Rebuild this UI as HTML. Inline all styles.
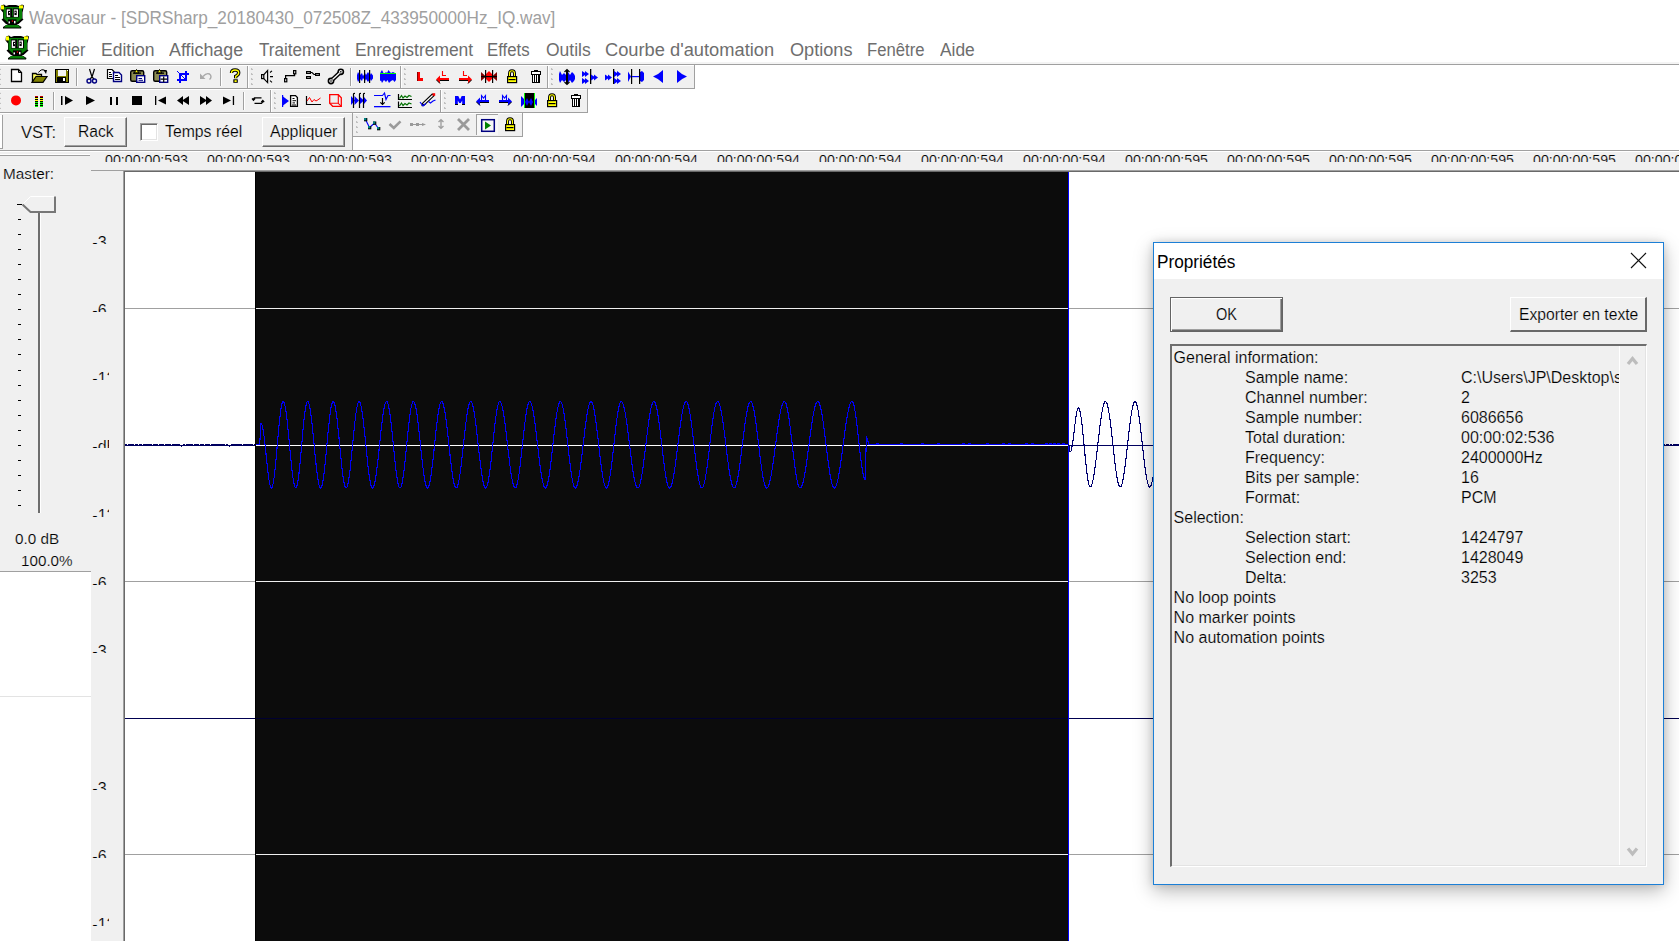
<!DOCTYPE html>
<html><head><meta charset="utf-8"><title>Wavosaur</title><style>
*{margin:0;padding:0;box-sizing:border-box}
html,body{width:1679px;height:941px;overflow:hidden;background:#fff;font-family:"Liberation Sans",sans-serif}
.a{position:absolute}
.t{position:absolute;line-height:1;white-space:pre;transform-origin:0 0;-webkit-text-stroke:0.18px #f0f0f0}
.w{-webkit-text-stroke:0}
svg{position:absolute;overflow:visible}
</style></head><body>

<div class="t w" style="left:29.40px;top:8.80px;font-size:18.9px;color:#a0a0a0;transform:scaleX(0.9091);">Wavosaur - [SDRSharp_20180430_072508Z_433950000Hz_IQ.wav]</div>
<svg class="a" style="left:0;top:0" width="40" height="64"><g transform="translate(0,4.4)"><path d="M1,1 L4,0 L6,1.5 L9,0.5 L16,0.5 L19,1.5 L22,0 L24,1 L23,6 L22.5,8 L22.5,14 L23.5,15 L18.5,19.5 L16.5,19.5 L17.5,20 L21.5,22.5 L21,24 L3,24 L3,22.5 L7,20 L8,19.5 L6,19.5 L1.5,15 L3,14 L3,8 L0.5,5 Z" fill="#000"/>
<path d="M3.5,2.5 L22,2.5 L22,14 L17,18 L8,18 L3.5,14 Z" fill="#078007"/>
<path d="M6,20.5 L18,20.5 L20.5,23 L4,23 Z" fill="#078007"/>
<rect x="1" y="1" width="3" height="4" fill="#ff0"/>
<rect x="19" y="1" width="4" height="3" fill="#ff0"/>
<rect x="6" y="4" width="13" height="9" fill="#000"/>
<rect x="6.7" y="5" width="3.5" height="7.5" fill="#fff"/>
<rect x="13.8" y="5" width="4.2" height="7.5" fill="#fff"/>
<rect x="8" y="6.4" width="2.3" height="4.4" fill="#000"/><rect x="9" y="7.6" width="1" height="1.2" fill="#fff"/>
<rect x="14.4" y="6.2" width="2.3" height="4.5" fill="#000"/><rect x="14.7" y="7.4" width="1" height="1.2" fill="#fff"/>
<rect x="12" y="3" width="0.8" height="9" fill="#078007"/>
<rect x="8" y="15" width="8.5" height="4.5" fill="#000"/>
<rect x="8.5" y="17" width="1.5" height="2" fill="#fff"/>
<rect x="14" y="16.5" width="1.5" height="2.5" fill="#fff"/>
<rect x="11.8" y="16" width="1.3" height="1.3" fill="#f00"/>
</g><g transform="translate(5,35.4)"><path d="M1,1 L4,0 L6,1.5 L9,0.5 L16,0.5 L19,1.5 L22,0 L24,1 L23,6 L22.5,8 L22.5,14 L23.5,15 L18.5,19.5 L16.5,19.5 L17.5,20 L21.5,22.5 L21,24 L3,24 L3,22.5 L7,20 L8,19.5 L6,19.5 L1.5,15 L3,14 L3,8 L0.5,5 Z" fill="#000"/>
<path d="M3.5,2.5 L22,2.5 L22,14 L17,18 L8,18 L3.5,14 Z" fill="#078007"/>
<path d="M6,20.5 L18,20.5 L20.5,23 L4,23 Z" fill="#078007"/>
<rect x="1" y="1" width="3" height="4" fill="#ff0"/>
<rect x="19" y="1" width="4" height="3" fill="#ff0"/>
<rect x="6" y="4" width="13" height="9" fill="#000"/>
<rect x="6.7" y="5" width="3.5" height="7.5" fill="#fff"/>
<rect x="13.8" y="5" width="4.2" height="7.5" fill="#fff"/>
<rect x="8" y="6.4" width="2.3" height="4.4" fill="#000"/><rect x="9" y="7.6" width="1" height="1.2" fill="#fff"/>
<rect x="14.4" y="6.2" width="2.3" height="4.5" fill="#000"/><rect x="14.7" y="7.4" width="1" height="1.2" fill="#fff"/>
<rect x="12" y="3" width="0.8" height="9" fill="#078007"/>
<rect x="8" y="15" width="8.5" height="4.5" fill="#000"/>
<rect x="8.5" y="17" width="1.5" height="2" fill="#fff"/>
<rect x="14" y="16.5" width="1.5" height="2.5" fill="#fff"/>
<rect x="11.8" y="16" width="1.3" height="1.3" fill="#f00"/>
</g></svg>
<div class="t w" style="left:36.60px;top:40.80px;font-size:18.9px;color:#6e6e6e;transform:scaleX(0.8553);">Fichier</div>
<div class="t w" style="left:100.60px;top:40.80px;font-size:18.9px;color:#6e6e6e;transform:scaleX(0.9275);">Edition</div>
<div class="t w" style="left:169.40px;top:40.80px;font-size:18.9px;color:#6e6e6e;transform:scaleX(0.9445);">Affichage</div>
<div class="t w" style="left:258.70px;top:40.80px;font-size:18.9px;color:#6e6e6e;transform:scaleX(0.9038);">Traitement</div>
<div class="t w" style="left:354.60px;top:40.80px;font-size:18.9px;color:#6e6e6e;transform:scaleX(0.9224);">Enregistrement</div>
<div class="t w" style="left:487.40px;top:40.80px;font-size:18.9px;color:#6e6e6e;transform:scaleX(0.8879);">Effets</div>
<div class="t w" style="left:545.50px;top:40.80px;font-size:18.9px;color:#6e6e6e;transform:scaleX(0.9253);">Outils</div>
<div class="t w" style="left:605.00px;top:40.80px;font-size:18.9px;color:#6e6e6e;transform:scaleX(0.9676);">Courbe d'automation</div>
<div class="t w" style="left:789.70px;top:40.80px;font-size:18.9px;color:#6e6e6e;transform:scaleX(0.9596);">Options</div>
<div class="t w" style="left:867.10px;top:40.80px;font-size:18.9px;color:#6e6e6e;transform:scaleX(0.8829);">Fenêtre</div>
<div class="t w" style="left:939.50px;top:40.80px;font-size:18.9px;color:#6e6e6e;transform:scaleX(0.9200);">Aide</div>
<div class="a" style="left:0px;top:62px;width:1679px;height:2px;background:#f4f4f4;"></div>
<div class="a" style="left:0px;top:64px;width:1679px;height:1px;background:#a0a0a0;"></div>
<div class="a" style="left:0px;top:65px;width:695px;height:24px;background:#f0f0f0;"></div>
<div class="a" style="left:694px;top:65px;width:1px;height:24px;background:#a0a0a0;"></div>
<div class="a" style="left:0px;top:88px;width:695px;height:1px;background:#a0a0a0;"></div>
<div class="a" style="left:0px;top:89px;width:588px;height:24px;background:#f0f0f0;"></div>
<div class="a" style="left:587px;top:89px;width:1px;height:24px;background:#a0a0a0;"></div>
<div class="a" style="left:0px;top:112px;width:588px;height:1px;background:#a0a0a0;"></div>
<div class="a" style="left:0px;top:113px;width:353px;height:38px;background:#f0f0f0;"></div>
<div class="a" style="left:352px;top:113px;width:1px;height:38px;background:#a0a0a0;"></div>
<div class="a" style="left:353px;top:113px;width:170px;height:24px;background:#f0f0f0;"></div>
<div class="a" style="left:522px;top:113px;width:1px;height:24px;background:#a0a0a0;"></div>
<div class="a" style="left:353px;top:136px;width:170px;height:1px;background:#a0a0a0;"></div>
<svg class="a" style="left:0;top:0" width="700" height="160" viewBox="0 0 700 160">
<rect x="0" y="65" width="694" height="1" fill="#fff"/>
<rect x="0" y="89" width="587" height="1" fill="#fff"/>
<rect x="0" y="113" width="352" height="1" fill="#fff"/>
<rect x="353" y="113" width="169" height="1" fill="#fff"/>
<rect x="-1" y="68" width="2" height="2" fill="#c0c0c0"/><rect x="0" y="68" width="1" height="1" fill="#e8e8e8"/>
<rect x="-1" y="73" width="2" height="2" fill="#c0c0c0"/><rect x="0" y="73" width="1" height="1" fill="#e8e8e8"/>
<rect x="-1" y="78" width="2" height="2" fill="#c0c0c0"/><rect x="0" y="78" width="1" height="1" fill="#e8e8e8"/>
<rect x="-1" y="83" width="2" height="2" fill="#c0c0c0"/><rect x="0" y="83" width="1" height="1" fill="#e8e8e8"/>
<rect x="251" y="68" width="2" height="2" fill="#c0c0c0"/><rect x="252" y="68" width="1" height="1" fill="#e8e8e8"/>
<rect x="251" y="73" width="2" height="2" fill="#c0c0c0"/><rect x="252" y="73" width="1" height="1" fill="#e8e8e8"/>
<rect x="251" y="78" width="2" height="2" fill="#c0c0c0"/><rect x="252" y="78" width="1" height="1" fill="#e8e8e8"/>
<rect x="251" y="83" width="2" height="2" fill="#c0c0c0"/><rect x="252" y="83" width="1" height="1" fill="#e8e8e8"/>
<rect x="404" y="68" width="2" height="2" fill="#c0c0c0"/><rect x="405" y="68" width="1" height="1" fill="#e8e8e8"/>
<rect x="404" y="73" width="2" height="2" fill="#c0c0c0"/><rect x="405" y="73" width="1" height="1" fill="#e8e8e8"/>
<rect x="404" y="78" width="2" height="2" fill="#c0c0c0"/><rect x="405" y="78" width="1" height="1" fill="#e8e8e8"/>
<rect x="404" y="83" width="2" height="2" fill="#c0c0c0"/><rect x="405" y="83" width="1" height="1" fill="#e8e8e8"/>
<rect x="551" y="68" width="2" height="2" fill="#c0c0c0"/><rect x="552" y="68" width="1" height="1" fill="#e8e8e8"/>
<rect x="551" y="73" width="2" height="2" fill="#c0c0c0"/><rect x="552" y="73" width="1" height="1" fill="#e8e8e8"/>
<rect x="551" y="78" width="2" height="2" fill="#c0c0c0"/><rect x="552" y="78" width="1" height="1" fill="#e8e8e8"/>
<rect x="551" y="83" width="2" height="2" fill="#c0c0c0"/><rect x="552" y="83" width="1" height="1" fill="#e8e8e8"/>
<rect x="-1" y="92" width="2" height="2" fill="#c0c0c0"/><rect x="0" y="92" width="1" height="1" fill="#e8e8e8"/>
<rect x="-1" y="97" width="2" height="2" fill="#c0c0c0"/><rect x="0" y="97" width="1" height="1" fill="#e8e8e8"/>
<rect x="-1" y="102" width="2" height="2" fill="#c0c0c0"/><rect x="0" y="102" width="1" height="1" fill="#e8e8e8"/>
<rect x="-1" y="107" width="2" height="2" fill="#c0c0c0"/><rect x="0" y="107" width="1" height="1" fill="#e8e8e8"/>
<rect x="274" y="92" width="2" height="2" fill="#c0c0c0"/><rect x="275" y="92" width="1" height="1" fill="#e8e8e8"/>
<rect x="274" y="97" width="2" height="2" fill="#c0c0c0"/><rect x="275" y="97" width="1" height="1" fill="#e8e8e8"/>
<rect x="274" y="102" width="2" height="2" fill="#c0c0c0"/><rect x="275" y="102" width="1" height="1" fill="#e8e8e8"/>
<rect x="274" y="107" width="2" height="2" fill="#c0c0c0"/><rect x="275" y="107" width="1" height="1" fill="#e8e8e8"/>
<rect x="444" y="92" width="2" height="2" fill="#c0c0c0"/><rect x="445" y="92" width="1" height="1" fill="#e8e8e8"/>
<rect x="444" y="97" width="2" height="2" fill="#c0c0c0"/><rect x="445" y="97" width="1" height="1" fill="#e8e8e8"/>
<rect x="444" y="102" width="2" height="2" fill="#c0c0c0"/><rect x="445" y="102" width="1" height="1" fill="#e8e8e8"/>
<rect x="444" y="107" width="2" height="2" fill="#c0c0c0"/><rect x="445" y="107" width="1" height="1" fill="#e8e8e8"/>
<rect x="356" y="116" width="2" height="2" fill="#c0c0c0"/><rect x="357" y="116" width="1" height="1" fill="#e8e8e8"/>
<rect x="356" y="121" width="2" height="2" fill="#c0c0c0"/><rect x="357" y="121" width="1" height="1" fill="#e8e8e8"/>
<rect x="356" y="126" width="2" height="2" fill="#c0c0c0"/><rect x="357" y="126" width="1" height="1" fill="#e8e8e8"/>
<rect x="356" y="131" width="2" height="2" fill="#c0c0c0"/><rect x="357" y="131" width="1" height="1" fill="#e8e8e8"/>
<rect x="247" y="66" width="1" height="22" fill="#a0a0a0"/><rect x="248" y="66" width="1" height="22" fill="#fff"/>
<rect x="400" y="66" width="1" height="22" fill="#a0a0a0"/><rect x="401" y="66" width="1" height="22" fill="#fff"/>
<rect x="547" y="66" width="1" height="22" fill="#a0a0a0"/><rect x="548" y="66" width="1" height="22" fill="#fff"/>
<rect x="270" y="90" width="1" height="22" fill="#a0a0a0"/><rect x="271" y="90" width="1" height="22" fill="#fff"/>
<rect x="440" y="90" width="1" height="22" fill="#a0a0a0"/><rect x="441" y="90" width="1" height="22" fill="#fff"/>
<rect x="76" y="68" width="1" height="18" fill="#a0a0a0"/><rect x="77" y="68" width="1" height="18" fill="#fff"/>
<rect x="220" y="68" width="1" height="18" fill="#a0a0a0"/><rect x="221" y="68" width="1" height="18" fill="#fff"/>
<rect x="350" y="68" width="1" height="18" fill="#a0a0a0"/><rect x="351" y="68" width="1" height="18" fill="#fff"/>
<rect x="53" y="92" width="1" height="18" fill="#a0a0a0"/><rect x="54" y="92" width="1" height="18" fill="#fff"/>
<rect x="243" y="92" width="1" height="18" fill="#a0a0a0"/><rect x="244" y="92" width="1" height="18" fill="#fff"/>
<path d="M11.5,69.5 H18.5 L21.5,72.5 V81.5 H11.5 Z" fill="#fff" stroke="#000" stroke-width="1.3"/>
<path d="M18.5,69.5 V72.5 H21.5" fill="none" stroke="#000" stroke-width="1"/>
<path d="M32.5,82 V73.5 H36 L37,74.5 H41.5 V77" fill="#ffff60" stroke="#000" stroke-width="1.3"/>
<path d="M32,82.3 L36,76.5 H47 L43,82.3 Z" fill="#808000" stroke="#000" stroke-width="1.2"/>
<path d="M38.5,72.5 Q41.5,68.2 45,70.5" fill="none" stroke="#000" stroke-width="1"/>
<path d="M43.5,70 L47,70 L46,74 Z" fill="#000"/>
<rect x="55" y="69" width="14" height="14" fill="#000"/>
<rect x="56" y="70" width="12" height="12" fill="#808000"/>
<rect x="58" y="70" width="8" height="6" fill="#f4f4f4"/>
<rect x="57" y="77" width="9" height="5" fill="#000"/>
<rect x="63" y="78" width="2" height="3" fill="#fff"/>
<rect x="67" y="70" width="1" height="1" fill="#fff"/>
<path d="M89.5,69 L92,77 M94.5,69 L92,77 M92,77 L90,79 M92,77 L94,79" fill="none" stroke="#000" stroke-width="1.2"/>
<circle cx="89" cy="81" r="2" fill="none" stroke="#000080" stroke-width="1.4"/>
<circle cx="94.5" cy="81" r="2" fill="none" stroke="#000080" stroke-width="1.4"/>
<path d="M107.5,69.5 H112 L114,71.5 V78.5 H107.5 Z" fill="#fff" stroke="#000" stroke-width="1.2"/>
<path d="M109,72.5 H111 M109,74.5 H112 M109,76.5 H112" stroke="#000" stroke-width="1"/>
<path d="M113.5,72.5 H119 L121.5,75 V81.5 H113.5 Z" fill="#fff" stroke="#000080" stroke-width="1.4"/>
<path d="M115,75.5 H118 M115,77.5 H120 M115,79.5 H120" stroke="#000" stroke-width="1"/>
<rect x="130.7" y="70.7" width="13" height="10.6" rx="1.5" fill="#8a8a50" stroke="#000" stroke-width="1.4"/>
<path d="M134,73 L136.5,69.5 L139,73 Z" fill="#ff0" stroke="#000" stroke-width="1"/>
<rect x="133" y="72.5" width="8" height="1.3" fill="#000"/>
<rect x="136.7" y="75.7" width="8" height="6.6" fill="#fff" stroke="#000080" stroke-width="1.4"/>
<path d="M138.5,78.5 H142 M138.5,80.3 H143" stroke="#000080" stroke-width="1"/>
<rect x="153.7" y="70.7" width="13" height="10.6" rx="1.5" fill="#8a8a50" stroke="#000" stroke-width="1.4"/>
<path d="M157,73 L159.5,69.5 L162,73 Z" fill="#ff0" stroke="#000" stroke-width="1"/>
<rect x="156" y="72.5" width="8" height="1.3" fill="#000"/>
<rect x="159.7" y="75.7" width="8" height="6.6" fill="#fff" stroke="#000080" stroke-width="1.4"/>
<path d="M163.7,76.5 V82 M160.5,79.2 H167" stroke="#000" stroke-width="1.2"/>
<path d="M180,74 H186 V80 H180 Z" fill="none" stroke="#00f" stroke-width="2"/>
<rect x="185" y="71" width="2" height="3" fill="#00f"/><rect x="186" y="73" width="3" height="2" fill="#00f"/>
<rect x="177" y="79" width="3" height="2" fill="#00f"/><rect x="179" y="80" width="2" height="3" fill="#00f"/>
<path d="M177,71 L185,79" stroke="#00f" stroke-width="1"/>
<path d="M203,76.5 Q206.5,72.5 209.5,74 Q212.5,76.5 209.5,79.5" fill="none" stroke="#a8a8a8" stroke-width="1.4"/>
<path d="M200,73.5 L200,79 L205.5,79 Z" fill="#a8a8a8"/>
<path d="M231.5,73 Q231.5,70 235,70 Q238.7,70 238.7,72.8 Q238.7,75 235.7,76.3 V78.2" fill="none" stroke="#000" stroke-width="3.4"/>
<path d="M231.5,73 Q231.5,70 235,70 Q238.7,70 238.7,72.8 Q238.7,75 235.7,76.3 V78.2" fill="none" stroke="#ff0" stroke-width="1.3"/>
<rect x="233.3" y="79.3" width="4.5" height="3.5" fill="#000"/><rect x="234.5" y="80.2" width="2.2" height="1.8" fill="#ff0"/>
<rect x="261.6" y="74.6" width="2.2" height="4" fill="none" stroke="#000" stroke-width="1.2"/>
<path d="M263.8,74.6 L267.6,70.6 V82.6 L263.8,78.6" fill="none" stroke="#000" stroke-width="1.2"/>
<path d="M270,72.5 L272,70.8 M270,76.6 H273 M270,80.7 L272,82.4" stroke="#000" stroke-width="1.1"/>
<rect x="284.6" y="78.6" width="2.2" height="3.2" fill="none" stroke="#000" stroke-width="1.2"/>
<path d="M285.6,78.6 V75.6 H294.6 V73.8" fill="none" stroke="#000" stroke-width="1.2"/>
<rect x="293.6" y="70.6" width="2.2" height="3.2" fill="none" stroke="#000" stroke-width="1.2"/>
<rect x="306.6" y="71.6" width="3.8" height="1.8" fill="none" stroke="#000" stroke-width="1.2"/>
<rect x="306.6" y="76.6" width="3.8" height="1.8" fill="none" stroke="#000" stroke-width="1.2"/>
<rect x="315.6" y="73.6" width="3.8" height="1.8" fill="none" stroke="#000" stroke-width="1.2"/>
<path d="M310.4,72.5 H312 L314,74.5 H315.6" fill="none" stroke="#000" stroke-width="1.1"/>
<path d="M331.5,80.5 L340.5,72" stroke="#000" stroke-width="4.2"/>
<circle cx="331" cy="81" r="2.6" fill="#fff" stroke="#000" stroke-width="1.6"/>
<circle cx="340.8" cy="71.8" r="2.6" fill="#fff" stroke="#000" stroke-width="1.6"/>
<path d="M332.5,79.5 L339.5,73" stroke="#fff" stroke-width="1.3"/>
<rect x="330.3" y="80.3" width="1.4" height="1.4" fill="#000"/><rect x="340.1" y="71.1" width="1.4" height="1.4" fill="#000"/>
<path d="M357,75 L358,72 L360,75 L362,73 L363,76 L365,73 L366,75 L368,72 L370,75 L371,73 L373,75.5 V78.5 L371,81 L370,79 L368,82 L366,79 L365,81 L363,78 L362,81 L360,79 L358,82 L357,79 Z" fill="#00f"/>
<rect x="359" y="70" width="1.2" height="13" fill="#000"/><rect x="364" y="70" width="1.2" height="13" fill="#000"/><rect x="369" y="70" width="1.2" height="13" fill="#000"/>
<path d="M380,73.5 L381,71.5 L382,70 L383.5,73 L385,73 L386,72 L387,73 L388.5,70 L390,72 L391,73 L393,72 L396,73.5 V80 L394.5,82 L393,80 L391,81 L389,83 L387.5,80 L386,82 L384,80 L382,83 L381,80.5 L380,81 Z" fill="#00f"/>
<rect x="380" y="73" width="16" height="1" fill="#00ff00"/>
<rect x="417" y="72" width="3" height="9" fill="#f00"/><rect x="417" y="78" width="6" height="3" fill="#f00"/><rect x="417" y="72" width="1" height="9" fill="#900000"/>
<path d="M442.5,71 V75.5 H446" fill="none" stroke="#f00" stroke-width="1.1"/>
<path d="M436,79.5 L440,75.5 V78 H449 V81 H440 V83.5 Z" fill="#f00"/>
<rect x="440" y="80" width="9" height="1" fill="#000"/><path d="M436.5,80 L440,83.5" stroke="#000" stroke-width="1"/>
<path d="M463.5,71 V75.5 H467" fill="none" stroke="#f00" stroke-width="1.1"/>
<path d="M472,79.5 L468,75.5 V78 H459 V81 H468 V83.5 Z" fill="#f00"/>
<rect x="459" y="80" width="9" height="1" fill="#000"/><path d="M471.5,80 L468,83.5" stroke="#000" stroke-width="1"/>
<path d="M481,72 L486,76.5 L481,81 Z" fill="#800000"/><path d="M497,72 L492,76.5 L497,81 Z" fill="#800000"/>
<path d="M486,74 L489,71 L492,74 V79 L489,82 L486,79 Z" fill="#f00"/>
<rect x="481" y="76" width="16" height="1.2" fill="#000"/>
<rect x="485" y="70" width="1.2" height="13" fill="#000"/><rect x="492" y="70" width="1.2" height="13" fill="#000"/>
<path d="M509.5,76 V73.5 Q509.5,70.7 512,70.7 Q514.5,70.7 514.5,73.5 V76" fill="none" stroke="#000" stroke-width="3"/><path d="M509.5,76 V73.5 Q509.5,70.7 512,70.7 Q514.5,70.7 514.5,73.5 V76" fill="none" stroke="#ff0" stroke-width="1.1"/><rect x="507.6" y="76.6" width="9" height="6" fill="#ff0" stroke="#000" stroke-width="1.2"/><rect x="508.5" y="79" width="7" height="1.2" fill="#000"/>
<g shape-rendering="crispEdges"><rect x="531" y="71" width="10" height="4" fill="#000"/><rect x="532" y="72" width="8" height="2" fill="#fff"/><rect x="534" y="70" width="4" height="1" fill="#000"/><rect x="532" y="75" width="8" height="8" fill="#000"/><rect x="533" y="75" width="1" height="7" fill="#fff"/><rect x="535" y="75" width="1" height="7" fill="#fff"/><rect x="537" y="75" width="1" height="7" fill="#fff"/></g>
<path d="M559,74 L560,71 L562,75 L564,73 L566,75 L568,72 L570,75 L572,72 L574,74 L575,76 V79 L574,81 L572,83 L570,80 L568,83 L566,80 L564,82 L562,80 L560,83 L559,80 Z" fill="#00f"/>
<rect x="566" y="70" width="2" height="14" fill="#000"/>
<path d="M564.5,72 L567,69.5 L569.5,72 M564.5,82 L567,84.5 L569.5,82" fill="none" stroke="#000" stroke-width="1.2"/>
<path d="M582,71 L585,73 V71 L589,74 L585,77 V75 L582,77 Z" fill="#00f"/>
<path d="M582,78 L585,80 V78 L589,81 L585,84 V82 L582,84 Z" fill="#00f"/>
<rect x="590" y="69" width="1.3" height="15" fill="#000"/>
<path d="M591,74.5 L594,76.5 V74.5 L598,77.5 L594,80.5 V78.5 L591,80.5 Z" fill="#00f"/>
<path d="M605,74.5 L608,76.5 V74.5 L612,77.5 L608,80.5 V78.5 L605,80.5 Z" fill="#00f"/>
<rect x="613" y="69" width="1.3" height="15" fill="#000"/>
<path d="M614,71 L617,73 V71 L621,74 L617,77 V75 L614,77 Z" fill="#00f"/>
<path d="M614,78 L617,80 V78 L621,81 L617,84 V82 L614,84 Z" fill="#00f"/>
<path d="M628,71.5 L631,76.5 L628,82 Z" fill="#00f"/><path d="M640,72 L642,71 L644,73 V80 L642,82 L640,81 Z" fill="#00f"/>
<rect x="631" y="69" width="1.2" height="15" fill="#000"/><rect x="639" y="69" width="1.2" height="15" fill="#000"/><rect x="632" y="76" width="7" height="1.2" fill="#00f"/>
<path d="M653,76.5 Q659,74 663,70 V83 Q659,79 653,76.5 Z" fill="#00f"/>
<path d="M687,76.5 Q681,74 677,70 V83 Q681,79 687,76.5 Z" fill="#00f"/>
<circle cx="16" cy="100.4" r="5" fill="#f00"/>
<rect x="35" y="96" width="3" height="1" fill="#c00000"/><rect x="40" y="96" width="3" height="1" fill="#c00000"/>
<rect x="35" y="97" width="3" height="1" fill="#000"/><rect x="40" y="97" width="3" height="1" fill="#000"/>
<rect x="35" y="98" width="3" height="1" fill="#ff0"/><rect x="40" y="98" width="3" height="1" fill="#ff0"/>
<rect x="35" y="99" width="3" height="1" fill="#000"/><rect x="40" y="99" width="3" height="1" fill="#000"/>
<rect x="35" y="100" width="3" height="1" fill="#ff0"/><rect x="40" y="100" width="3" height="1" fill="#ff0"/>
<rect x="35" y="101" width="3" height="1" fill="#000"/><rect x="40" y="101" width="3" height="1" fill="#000"/>
<rect x="35" y="102" width="3" height="1" fill="#0f0"/><rect x="40" y="102" width="3" height="1" fill="#0f0"/>
<rect x="35" y="103" width="3" height="1" fill="#000"/><rect x="40" y="103" width="3" height="1" fill="#000"/>
<rect x="35" y="104" width="3" height="1" fill="#0f0"/><rect x="40" y="104" width="3" height="1" fill="#0f0"/>
<rect x="35" y="105" width="3" height="1" fill="#000"/><rect x="40" y="105" width="3" height="1" fill="#000"/>
<rect x="35" y="106" width="3" height="1" fill="#0f0"/><rect x="40" y="106" width="3" height="1" fill="#0f0"/>
<rect x="61" y="96" width="1.5" height="9" fill="#000"/><path d="M65,96 L73,100.5 L65,105 Z" fill="#000"/>
<path d="M86,96 L95,100.5 L86,105 Z" fill="#000"/>
<rect x="110" y="97" width="2" height="8" fill="#000"/><rect x="116" y="97" width="2" height="8" fill="#000"/>
<rect x="132" y="96" width="10" height="9" fill="#000"/>
<rect x="155" y="96" width="1.3" height="9" fill="#000"/><path d="M158,100.5 L166,96.5 V104.5 Z" fill="#000"/>
<path d="M177,100.5 L183,96 V105 Z M182,100.5 L189,96 V105 Z" fill="#000"/>
<path d="M212,100.5 L206,96 V105 Z M207,100.5 L200,96 V105 Z" fill="#000"/>
<path d="M223,96.5 L231,100.5 L223,104.5 Z" fill="#000"/><rect x="232.8" y="96" width="1.3" height="9" fill="#000"/>
<path d="M261.5,97.8 H254.5 L253,99.5 M252,98.5 L253.5,100.3 L255,98.5" fill="none" stroke="#000" stroke-width="1.2"/>
<path d="M254.5,103.3 H261.5 L263,101.5 M261.2,102.2 L262.8,100.5 L264.2,102.2" fill="none" stroke="#000" stroke-width="1.2"/>
<rect x="282" y="95" width="1.2" height="12" fill="#00f"/><path d="M283,96.5 L289,101 L283,105.5 Z" fill="#00f"/><path d="M283,99 L285,101 L283,103Z" fill="#00f"/>
<path d="M290.6,95.6 H295.5 L297.4,97.5 V106.4 H290.6 Z" fill="#fff" stroke="#000" stroke-width="1.3"/>
<path d="M292.5,98.5 H294.5 M292.5,100.7 H296 M292.5,102.9 H295 M292,105 H296" stroke="#000" stroke-width="1"/>
<path d="M306.5,96 V104.5 H321" fill="none" stroke="#000" stroke-width="1.2"/>
<path d="M307,101 L309.5,97.5 L312,102 L314,99.5 L316,101 L318,99.8 L320.5,98" fill="none" stroke="#f00" stroke-width="1"/>
<path d="M329.7,94.7 H338.3 L341.3,97.7 V106.3 H332.7 L329.7,103.3 Z" fill="none" stroke="#f00" stroke-width="1.3"/>
<path d="M329.7,103.3 H338.3 V94.7 M338.3,103.3 L341.3,106.3" fill="none" stroke="#f00" stroke-width="1.1"/>
<path d="M351,96 L355,100.5 L351,105 Z M354.5,96 L359,100.5 L354.5,105 Z M360,97 L364,100.5 L360,104 Z M364,97 L367,100.5 L364,104 Z" fill="#00f"/>
<path d="M353.5,108 V94 Q353.5,93.3 355,93.3 M359.5,108 V94 Q359.5,93.3 361,93.3 M363.5,108 V94 Q363.5,93.3 365,93.3" fill="none" stroke="#000" stroke-width="1.2"/>
<path d="M374,95.5 H382.5 L384.5,93 L386,99.5 L388,95.5 H390.5" fill="none" stroke="#00f" stroke-width="1.2"/>
<rect x="374" y="106" width="16.5" height="1.3" fill="#00f"/>
<path d="M382.5,98 V104.5 M380.3,102.3 L382.5,104.5 L384.7,102.3" fill="none" stroke="#000" stroke-width="1.2"/>
<path d="M398.5,94 V99.5 H412 M398.5,101.5 V107.5 H412" fill="none" stroke="#000" stroke-width="1.2"/>
<path d="M399.5,98.5 L401.5,95.5 L403,98 L405,96 L407,97.5 L409,95.5 L411.5,96.5 M399.5,106 L401.5,103 L403,105.5 L405,103.5 L407,105 L409,103 L411.5,104" fill="none" stroke="#007000" stroke-width="1.2"/>
<path d="M422.5,105 L433.5,94.5" stroke="#000" stroke-width="3.6"/><path d="M423.5,104 L432.8,95.2" stroke="#fff" stroke-width="1.2"/>
<rect x="432.6" y="93.2" width="2.6" height="2.6" fill="#f00"/><rect x="421.5" y="104.5" width="1.6" height="1.6" fill="#000"/>
<path d="M420,102 L423,106 L426,103.5 M428.5,101.5 L430.5,103 L433,101 L435.5,100" fill="none" stroke="#00f" stroke-width="1.2"/>
<path d="M455,105 V96 H458.3 L460,99.5 L461.7,96 H465 V105 H462.2 V100.5 L460.8,103 H459.2 L457.8,100.5 V105 Z" fill="#00f"/>
<rect x="455" y="104" width="3" height="1" fill="#000"/><rect x="462" y="104" width="3" height="1" fill="#000"/>
<path d="M481.5,100 V95.5 L483.5,98 L485.5,95.5 V100" fill="none" stroke="#00f" stroke-width="1.1"/>
<path d="M476,101.5 L480,97.5 V100 H489 V103 H480 V105.5 Z" fill="#00f"/><rect x="480" y="102" width="9" height="1" fill="#000"/><path d="M476.5,102 L480,105.5" stroke="#000"/>
<path d="M502.5,100 V95.5 L504.5,98 L506.5,95.5 V100" fill="none" stroke="#00f" stroke-width="1.1"/>
<path d="M512,101.5 L508,97.5 V100 H499 V103 H508 V105.5 Z" fill="#00f"/><rect x="499" y="102" width="9" height="1" fill="#000"/><path d="M511.5,102 L508,105.5" stroke="#000"/>
<path d="M521,96 L524,99 V104 L521,107 Z" fill="#00f"/><path d="M537,98 L535,100 V104 L537,106 Z" fill="#00f"/>
<rect x="524" y="93" width="11" height="15" fill="#000"/><rect x="524" y="93" width="1" height="15" fill="#0f0"/><rect x="534" y="93" width="1" height="15" fill="#0f0"/>
<path d="M525,102 L527,98 L529,102 L531,98 L533,102 L531,106 L529,102 L527,106 Z" fill="#00f"/>
<path d="M549.5,100 V97.5 Q549.5,94.7 552,94.7 Q554.5,94.7 554.5,97.5 V100" fill="none" stroke="#000" stroke-width="3"/><path d="M549.5,100 V97.5 Q549.5,94.7 552,94.7 Q554.5,94.7 554.5,97.5 V100" fill="none" stroke="#ff0" stroke-width="1.1"/><rect x="547.6" y="100.6" width="9" height="6" fill="#ff0" stroke="#000" stroke-width="1.2"/><rect x="548.5" y="103" width="7" height="1.2" fill="#000"/>
<g shape-rendering="crispEdges"><rect x="571" y="95" width="10" height="4" fill="#000"/><rect x="572" y="96" width="8" height="2" fill="#fff"/><rect x="574" y="94" width="4" height="1" fill="#000"/><rect x="572" y="99" width="8" height="8" fill="#000"/><rect x="573" y="99" width="1" height="7" fill="#fff"/><rect x="575" y="99" width="1" height="7" fill="#fff"/><rect x="577" y="99" width="1" height="7" fill="#fff"/></g>
<path d="M365.5,119.5 L369.5,127.5 L374.5,123 L378.5,128.5" fill="none" stroke="#00f" stroke-width="1.1"/>
<rect x="364" y="118" width="3.3" height="3.3" fill="#000"/><rect x="364" y="118" width="2.3" height="2.3" fill="#008080"/>
<rect x="368" y="126" width="3.3" height="3.3" fill="#000"/><rect x="368" y="126" width="2.3" height="2.3" fill="#008080"/>
<rect x="373" y="121.5" width="3.3" height="3.3" fill="#000"/><rect x="373" y="121.5" width="2.3" height="2.3" fill="#008080"/>
<rect x="377" y="127" width="3.3" height="3.3" fill="#000"/><rect x="377" y="127" width="2.3" height="2.3" fill="#008080"/>
<path d="M389.5,124 L393.8,128 L400.5,121.3" fill="none" stroke="#9a9a9a" stroke-width="2.6"/>
<path d="M410,124.5 H424" stroke="#9a9a9a" stroke-width="1"/><rect x="410" y="123" width="3" height="3" fill="#9a9a9a"/><rect x="416" y="123" width="3" height="3" fill="#9a9a9a"/><path d="M422,123 L426,124.5 L422,126 Z" fill="#9a9a9a"/>
<path d="M441,120 V128 M438.5,122 L441,119.8 L443.5,122 M438.5,126 L441,128.2 L443.5,126" fill="none" stroke="#a0a0a0" stroke-width="1.4"/>
<path d="M458,119 L469,130 M469,119 L458,130" stroke="#9a9a9a" stroke-width="2.8"/>
<rect x="476" y="114" width="22" height="21" fill="#f7f7f7"/><rect x="476" y="114" width="22" height="1" fill="#a0a0a0"/><rect x="476" y="114" width="1" height="21" fill="#a0a0a0"/>
<rect x="481.7" y="119.7" width="12.6" height="11.6" fill="none" stroke="#000080" stroke-width="1.5"/>
<path d="M485,121.5 L491,125.5 L485,129.5 Z" fill="#008000"/>
<path d="M507.5,124 V121.5 Q507.5,118.7 510,118.7 Q512.5,118.7 512.5,121.5 V124" fill="none" stroke="#000" stroke-width="3"/><path d="M507.5,124 V121.5 Q507.5,118.7 510,118.7 Q512.5,118.7 512.5,121.5 V124" fill="none" stroke="#ff0" stroke-width="1.1"/><rect x="505.6" y="124.6" width="9" height="6" fill="#ff0" stroke="#000" stroke-width="1.2"/><rect x="506.5" y="127" width="7" height="1.2" fill="#000"/>
</svg>
<svg class="a" style="left:0;top:0" width="30" height="160"><rect x="0" y="115" width="2" height="33" fill="#fff"/><rect x="2" y="115" width="1" height="34" fill="#a0a0a0"/><rect x="0" y="148" width="3" height="1" fill="#a0a0a0"/></svg>
<div class="t" style="left:20.70px;top:124.76px;font-size:16px;color:#000;transform:scaleX(1.0358);">VST:</div>
<div class="a" style="left:64px;top:117px;width:63px;height:30px;background:#f0f0f0;border-top:1px solid #fff;border-left:1px solid #fff;border-right:1px solid #696969;border-bottom:1px solid #696969;box-shadow:inset -1px -1px 0 #a0a0a0"></div>
<div class="t" style="left:78.00px;top:124.26px;font-size:16px;color:#000;transform:scaleX(0.9794);">Rack</div>
<div class="a" style="left:140px;top:123px;width:18px;height:18px;background:#fff;border-top:1px solid #a0a0a0;border-left:1px solid #a0a0a0;border-right:1px solid #fff;border-bottom:1px solid #fff;box-shadow:inset 1px 1px 0 #696969,inset -1px -1px 0 #e3e3e3"></div>
<div class="t" style="left:165.40px;top:124.26px;font-size:16px;color:#000;transform:scaleX(0.9866);">Temps réel</div>
<div class="a" style="left:262px;top:117px;width:83px;height:30px;background:#f0f0f0;border-top:1px solid #fff;border-left:1px solid #fff;border-right:1px solid #696969;border-bottom:1px solid #696969;box-shadow:inset -1px -1px 0 #a0a0a0"></div>
<div class="t" style="left:269.70px;top:124.26px;font-size:16px;color:#000;transform:scaleX(0.9971);">Appliquer</div>
<div class="a" style="left:0px;top:150px;width:1679px;height:1px;background:#a0a0a0;"></div>
<div class="a" style="left:0px;top:151px;width:1679px;height:1px;background:#ffffff;"></div>
<div class="a" style="left:0px;top:152px;width:1679px;height:19px;background:#f0f0f0;"></div>
<div class="a" style="left:91px;top:152px;width:1588px;height:10px;overflow:hidden">
<div class="t" style="left:14.10px;top:0.98px;font-size:14.2px;color:#000;">00:00:00:593</div>
<div class="t" style="left:116.10px;top:0.98px;font-size:14.2px;color:#000;">00:00:00:593</div>
<div class="t" style="left:218.10px;top:0.98px;font-size:14.2px;color:#000;">00:00:00:593</div>
<div class="t" style="left:320.10px;top:0.98px;font-size:14.2px;color:#000;">00:00:00:593</div>
<div class="t" style="left:422.10px;top:0.98px;font-size:14.2px;color:#000;">00:00:00:594</div>
<div class="t" style="left:524.10px;top:0.98px;font-size:14.2px;color:#000;">00:00:00:594</div>
<div class="t" style="left:626.10px;top:0.98px;font-size:14.2px;color:#000;">00:00:00:594</div>
<div class="t" style="left:728.10px;top:0.98px;font-size:14.2px;color:#000;">00:00:00:594</div>
<div class="t" style="left:830.10px;top:0.98px;font-size:14.2px;color:#000;">00:00:00:594</div>
<div class="t" style="left:932.10px;top:0.98px;font-size:14.2px;color:#000;">00:00:00:594</div>
<div class="t" style="left:1034.10px;top:0.98px;font-size:14.2px;color:#000;">00:00:00:595</div>
<div class="t" style="left:1136.10px;top:0.98px;font-size:14.2px;color:#000;">00:00:00:595</div>
<div class="t" style="left:1238.10px;top:0.98px;font-size:14.2px;color:#000;">00:00:00:595</div>
<div class="t" style="left:1340.10px;top:0.98px;font-size:14.2px;color:#000;">00:00:00:595</div>
<div class="t" style="left:1442.10px;top:0.98px;font-size:14.2px;color:#000;">00:00:00:595</div>
<div class="t" style="left:1544.10px;top:0.98px;font-size:14.2px;color:#000;">00:00:00:595</div>
</div>
<div class="a" style="left:91px;top:170px;width:1588px;height:1px;background:#a0a0a0;"></div>
<div class="a" style="left:0px;top:152px;width:91px;height:789px;background:#f0f0f0;"></div>
<div class="a" style="left:0px;top:154px;width:90px;height:1px;background:#ffffff;"></div>
<div class="a" style="left:0px;top:155px;width:90px;height:1px;background:#a0a0a0;"></div>
<div class="t" style="left:3.00px;top:165.88px;font-size:15.5px;color:#000;transform:scaleX(0.9870);">Master:</div>
<div class="t" style="left:14.90px;top:530.88px;font-size:15.5px;color:#000;transform:scaleX(0.9842);">0.0 dB</div>
<div class="t" style="left:20.70px;top:552.88px;font-size:15.5px;color:#000;transform:scaleX(0.9816);">100.0%</div>
<div class="a" style="left:0px;top:571px;width:91px;height:1px;background:#a0a0a0;"></div>
<div class="a" style="left:0px;top:572px;width:91px;height:369px;background:#ffffff;"></div>
<div class="a" style="left:0px;top:696px;width:91px;height:1px;background:#e3e3e3;"></div>
<svg class="a" style="left:0;top:150px" width="91" height="380" viewBox="0 150 91 380"><rect x="38" y="212" width="2" height="301" fill="#6d6d6d"/><rect x="40" y="212" width="1" height="301" fill="#fff"/><rect x="17" y="204" width="5" height="1" fill="#000"/><rect x="18" y="219" width="3" height="1" fill="#000"/><rect x="18" y="234" width="3" height="1" fill="#000"/><rect x="18" y="249" width="3" height="1" fill="#000"/><rect x="18" y="264" width="3" height="1" fill="#000"/><rect x="18" y="279" width="3" height="1" fill="#000"/><rect x="18" y="294" width="3" height="1" fill="#000"/><rect x="18" y="309" width="3" height="1" fill="#000"/><rect x="18" y="324" width="3" height="1" fill="#000"/><rect x="18" y="339" width="3" height="1" fill="#000"/><rect x="18" y="354" width="3" height="1" fill="#000"/><rect x="18" y="370" width="3" height="1" fill="#000"/><rect x="18" y="385" width="3" height="1" fill="#000"/><rect x="18" y="400" width="3" height="1" fill="#000"/><rect x="18" y="415" width="3" height="1" fill="#000"/><rect x="18" y="430" width="3" height="1" fill="#000"/><rect x="18" y="445" width="3" height="1" fill="#000"/><rect x="18" y="460" width="3" height="1" fill="#000"/><rect x="18" y="475" width="3" height="1" fill="#000"/><rect x="18" y="490" width="3" height="1" fill="#000"/><rect x="18" y="505" width="3" height="1" fill="#000"/><path d="M22.5,204.5 L30.5,196.5 H55.5 V212.5 H30.5 Z" fill="#f0f0f0"/><path d="M22.5,204.5 L30.5,196.5 H55" fill="none" stroke="#fff" stroke-width="1"/><path d="M55,196.5 V212 H30.5 L22.5,204.5" fill="none" stroke="#777" stroke-width="2"/></svg>
<div class="a" style="left:91px;top:171px;width:33px;height:770px;background:#f0f0f0;"></div>
<div class="a" style="left:91px;top:236px;width:17.5px;height:8px;overflow:hidden">
<div class="t" style="left:1.30px;top:-1.04px;font-size:16px;color:#000;">-3 dB</div>
</div>
<div class="a" style="left:91px;top:304px;width:17.5px;height:8px;overflow:hidden">
<div class="t" style="left:1.30px;top:-1.04px;font-size:16px;color:#000;">-6 dB</div>
</div>
<div class="a" style="left:91px;top:372px;width:17.5px;height:8px;overflow:hidden">
<div class="t" style="left:1.30px;top:-1.04px;font-size:16px;color:#000;">-12 dB</div>
</div>
<div class="a" style="left:91px;top:440px;width:17.5px;height:8px;overflow:hidden">
<div class="t" style="left:1.30px;top:-1.04px;font-size:16px;color:#000;">-dB</div>
</div>
<div class="a" style="left:91px;top:509px;width:17.5px;height:8px;overflow:hidden">
<div class="t" style="left:1.30px;top:-1.04px;font-size:16px;color:#000;">-12 dB</div>
</div>
<div class="a" style="left:91px;top:577px;width:17.5px;height:8px;overflow:hidden">
<div class="t" style="left:1.30px;top:-1.04px;font-size:16px;color:#000;">-6 dB</div>
</div>
<div class="a" style="left:91px;top:645px;width:17.5px;height:8px;overflow:hidden">
<div class="t" style="left:1.30px;top:-1.04px;font-size:16px;color:#000;">-3 dB</div>
</div>
<div class="a" style="left:91px;top:782px;width:17.5px;height:8px;overflow:hidden">
<div class="t" style="left:1.30px;top:-1.04px;font-size:16px;color:#000;">-3 dB</div>
</div>
<div class="a" style="left:91px;top:850px;width:17.5px;height:8px;overflow:hidden">
<div class="t" style="left:1.30px;top:-1.04px;font-size:16px;color:#000;">-6 dB</div>
</div>
<div class="a" style="left:91px;top:918px;width:17.5px;height:8px;overflow:hidden">
<div class="t" style="left:1.30px;top:-1.04px;font-size:16px;color:#000;">-12 dB</div>
</div>
<svg class="a" style="left:0;top:0" width="1679" height="941" viewBox="0 0 1679 941">
<rect x="124" y="171" width="1555" height="770" fill="#ffffff"/>
<rect x="124" y="171" width="1555" height="1" fill="#696969"/>
<rect x="124" y="171" width="1" height="770" fill="#696969"/>
<rect x="123" y="171" width="1" height="770" fill="#a0a0a0"/>
<rect x="255" y="172" width="813" height="769" fill="#0c0c0c"/>
<rect x="255" y="172" width="1" height="769" fill="#000"/>
<rect x="1068" y="172" width="1" height="769" fill="#0000ff"/>
<rect x="125" y="308" width="130" height="1" fill="#a0a0a0"/>
<rect x="256" y="308" width="812" height="1" fill="#f0f0f0"/>
<rect x="1069" y="308" width="610" height="1" fill="#a0a0a0"/>
<rect x="125" y="581" width="130" height="1" fill="#a0a0a0"/>
<rect x="256" y="581" width="812" height="1" fill="#f0f0f0"/>
<rect x="1069" y="581" width="610" height="1" fill="#a0a0a0"/>
<rect x="125" y="854" width="130" height="1" fill="#a0a0a0"/>
<rect x="256" y="854" width="812" height="1" fill="#f0f0f0"/>
<rect x="1069" y="854" width="610" height="1" fill="#a0a0a0"/>
<rect x="125" y="444" width="130" height="2" fill="#000060"/>
<rect x="256" y="445" width="812" height="1" fill="#ffffff"/>
<rect x="127" y="444" width="1" height="1" fill="#ffffff"/>
<rect x="134" y="444" width="1" height="1" fill="#ffffff"/>
<rect x="138" y="444" width="1" height="1" fill="#ffffff"/>
<rect x="142" y="444" width="1" height="1" fill="#ffffff"/>
<rect x="152" y="444" width="1" height="1" fill="#ffffff"/>
<rect x="158" y="444" width="1" height="1" fill="#ffffff"/>
<rect x="164" y="444" width="1" height="1" fill="#ffffff"/>
<rect x="171" y="444" width="1" height="1" fill="#ffffff"/>
<rect x="185" y="444" width="1" height="1" fill="#ffffff"/>
<rect x="193" y="444" width="1" height="1" fill="#ffffff"/>
<rect x="199" y="444" width="1" height="1" fill="#ffffff"/>
<rect x="204" y="444" width="1" height="1" fill="#ffffff"/>
<rect x="210" y="444" width="1" height="1" fill="#ffffff"/>
<rect x="225" y="444" width="1" height="1" fill="#ffffff"/>
<rect x="242" y="444" width="1" height="1" fill="#ffffff"/>
<rect x="253" y="444" width="1" height="1" fill="#ffffff"/>
<rect x="181" y="446" width="1" height="1" fill="#000060"/><rect x="180" y="444" width="3" height="1" fill="#ffffff"/>
<rect x="229" y="446" width="1" height="1" fill="#000060"/><rect x="228" y="444" width="3" height="1" fill="#ffffff"/>
<rect x="1069" y="445" width="90" height="1" fill="#000060"/>
<rect x="1159" y="444" width="520" height="2" fill="#000060"/>
<rect x="1665" y="444" width="1" height="1" fill="#ffffff"/>
<rect x="1669" y="444" width="1" height="1" fill="#ffffff"/>
<rect x="1672" y="444" width="1" height="1" fill="#ffffff"/>
<rect x="125" y="718" width="130" height="1" fill="#000050"/>
<rect x="256" y="718" width="812" height="1" fill="#000030"/>
<rect x="1069" y="718" width="610" height="1" fill="#000050"/>
<path d="M256,444.5 L259.5,444.5 L259.50,444.50 L260.00,439.25 L260.50,428.75 L261.00,423.50 L261.52,423.90 L262.04,425.08 L262.56,427.02 L263.08,429.66 L263.60,432.95 L264.12,436.79 L264.64,441.11 L265.16,445.78 L265.68,450.70 L266.20,455.75 L266.72,460.80 L267.24,465.72 L267.76,470.39 L268.28,474.71 L268.80,478.55 L269.32,481.84 L269.84,484.48 L270.36,486.42 L270.88,487.60 L271.40,488.00 L271.91,487.60 L272.43,486.40 L272.94,484.42 L273.45,481.70 L273.97,478.30 L274.48,474.27 L274.99,469.69 L275.50,464.65 L276.02,459.23 L276.53,453.55 L277.04,447.70 L277.56,441.80 L278.07,435.95 L278.58,430.27 L279.10,424.85 L279.61,419.81 L280.12,415.23 L280.63,411.20 L281.15,407.80 L281.66,405.08 L282.17,403.10 L282.69,401.90 L283.20,401.50 L283.70,401.84 L284.21,402.86 L284.71,404.54 L285.22,406.85 L285.72,409.76 L286.22,413.22 L286.73,417.18 L287.23,421.58 L287.74,426.34 L288.24,431.39 L288.74,436.65 L289.25,442.03 L289.75,447.47 L290.26,452.85 L290.76,458.11 L291.26,463.16 L291.77,467.92 L292.27,472.32 L292.78,476.28 L293.28,479.74 L293.78,482.65 L294.29,484.96 L294.79,486.64 L295.30,487.66 L295.80,488.00 L296.31,487.60 L296.83,486.40 L297.34,484.42 L297.85,481.70 L298.37,478.30 L298.88,474.27 L299.39,469.69 L299.90,464.65 L300.42,459.23 L300.93,453.55 L301.44,447.70 L301.96,441.80 L302.47,435.95 L302.98,430.27 L303.50,424.85 L304.01,419.81 L304.52,415.23 L305.03,411.20 L305.55,407.80 L306.06,405.08 L306.57,403.10 L307.09,401.90 L307.60,401.50 L308.10,401.82 L308.60,402.76 L309.10,404.31 L309.60,406.45 L310.10,409.16 L310.60,412.38 L311.10,416.07 L311.60,420.18 L312.10,424.65 L312.60,429.41 L313.10,434.40 L313.60,439.54 L314.10,444.75 L314.60,449.96 L315.10,455.10 L315.60,460.09 L316.10,464.85 L316.60,469.32 L317.10,473.43 L317.60,477.12 L318.10,480.34 L318.60,483.05 L319.10,485.19 L319.60,486.74 L320.10,487.68 L320.60,488.00 L321.10,487.66 L321.61,486.64 L322.11,484.96 L322.62,482.65 L323.12,479.74 L323.62,476.28 L324.13,472.32 L324.63,467.92 L325.14,463.16 L325.64,458.11 L326.14,452.85 L326.65,447.47 L327.15,442.03 L327.66,436.65 L328.16,431.39 L328.66,426.34 L329.17,421.58 L329.67,417.18 L330.18,413.22 L330.68,409.76 L331.18,406.85 L331.69,404.54 L332.19,402.86 L332.70,401.84 L333.20,401.50 L333.72,401.84 L334.23,402.86 L334.75,404.54 L335.26,406.85 L335.78,409.76 L336.30,413.22 L336.81,417.18 L337.33,421.58 L337.84,426.34 L338.36,431.39 L338.88,436.65 L339.39,442.03 L339.91,447.47 L340.42,452.85 L340.94,458.11 L341.46,463.16 L341.97,467.92 L342.49,472.32 L343.00,476.28 L343.52,479.74 L344.04,482.65 L344.55,484.96 L345.07,486.64 L345.58,487.66 L346.10,488.00 L346.60,487.68 L347.10,486.74 L347.60,485.19 L348.10,483.05 L348.60,480.34 L349.10,477.12 L349.60,473.43 L350.10,469.32 L350.60,464.85 L351.10,460.09 L351.60,455.10 L352.10,449.96 L352.60,444.75 L353.10,439.54 L353.60,434.40 L354.10,429.41 L354.60,424.65 L355.10,420.18 L355.60,416.07 L356.10,412.38 L356.60,409.16 L357.10,406.45 L357.60,404.31 L358.10,402.76 L358.60,401.82 L359.10,401.50 L359.62,401.82 L360.13,402.76 L360.65,404.31 L361.16,406.45 L361.68,409.16 L362.19,412.38 L362.71,416.07 L363.22,420.18 L363.74,424.65 L364.25,429.41 L364.77,434.40 L365.28,439.54 L365.80,444.75 L366.32,449.96 L366.83,455.10 L367.35,460.09 L367.86,464.85 L368.38,469.32 L368.89,473.43 L369.41,477.12 L369.92,480.34 L370.44,483.05 L370.95,485.19 L371.47,486.74 L371.98,487.68 L372.50,488.00 L373.00,487.73 L373.51,486.92 L374.01,485.57 L374.51,483.72 L375.02,481.37 L375.52,478.56 L376.02,475.33 L376.53,471.72 L377.03,467.76 L377.54,463.52 L378.04,459.03 L378.54,454.37 L379.05,449.59 L379.55,444.75 L380.05,439.91 L380.56,435.13 L381.06,430.47 L381.56,425.98 L382.07,421.74 L382.57,417.78 L383.08,414.17 L383.58,410.94 L384.08,408.13 L384.59,405.78 L385.09,403.93 L385.59,402.58 L386.10,401.77 L386.60,401.50 L387.12,401.82 L387.63,402.76 L388.15,404.31 L388.66,406.45 L389.18,409.16 L389.69,412.38 L390.21,416.07 L390.72,420.18 L391.24,424.65 L391.75,429.41 L392.27,434.40 L392.78,439.54 L393.30,444.75 L393.82,449.96 L394.33,455.10 L394.85,460.09 L395.36,464.85 L395.88,469.32 L396.39,473.43 L396.91,477.12 L397.42,480.34 L397.94,483.05 L398.45,485.19 L398.97,486.74 L399.48,487.68 L400.00,488.00 L400.52,487.68 L401.03,486.74 L401.55,485.19 L402.06,483.05 L402.58,480.34 L403.09,477.12 L403.61,473.43 L404.12,469.32 L404.64,464.85 L405.15,460.09 L405.67,455.10 L406.18,449.96 L406.70,444.75 L407.22,439.54 L407.73,434.40 L408.25,429.41 L408.76,424.65 L409.28,420.18 L409.79,416.07 L410.31,412.38 L410.82,409.16 L411.34,406.45 L411.85,404.31 L412.37,402.76 L412.88,401.82 L413.40,401.50 L413.90,401.77 L414.41,402.58 L414.91,403.93 L415.41,405.78 L415.92,408.13 L416.42,410.94 L416.92,414.17 L417.43,417.78 L417.93,421.74 L418.44,425.98 L418.94,430.47 L419.44,435.13 L419.95,439.91 L420.45,444.75 L420.95,449.59 L421.46,454.37 L421.96,459.03 L422.46,463.52 L422.97,467.76 L423.47,471.72 L423.98,475.33 L424.48,478.56 L424.98,481.37 L425.49,483.72 L425.99,485.57 L426.49,486.92 L427.00,487.73 L427.50,488.00 L428.00,487.73 L428.51,486.92 L429.01,485.57 L429.51,483.72 L430.02,481.37 L430.52,478.56 L431.02,475.33 L431.53,471.72 L432.03,467.76 L432.54,463.52 L433.04,459.03 L433.54,454.37 L434.05,449.59 L434.55,444.75 L435.05,439.91 L435.56,435.13 L436.06,430.47 L436.56,425.98 L437.07,421.74 L437.57,417.78 L438.08,414.17 L438.58,410.94 L439.08,408.13 L439.59,405.78 L440.09,403.93 L440.59,402.58 L441.10,401.77 L441.60,401.50 L442.10,401.75 L442.61,402.51 L443.11,403.76 L443.61,405.50 L444.12,407.69 L444.62,410.32 L445.12,413.35 L445.63,416.75 L446.13,420.48 L446.63,424.49 L447.14,428.74 L447.64,433.18 L448.14,437.75 L448.65,442.41 L449.15,447.09 L449.66,451.75 L450.16,456.32 L450.66,460.76 L451.17,465.01 L451.67,469.02 L452.17,472.75 L452.68,476.15 L453.18,479.18 L453.68,481.81 L454.19,484.00 L454.69,485.74 L455.19,486.99 L455.70,487.75 L456.20,488.00 L456.70,487.75 L457.20,486.99 L457.70,485.74 L458.20,484.00 L458.70,481.81 L459.20,479.18 L459.70,476.15 L460.20,472.75 L460.70,469.02 L461.20,465.01 L461.70,460.76 L462.20,456.32 L462.70,451.75 L463.20,447.09 L463.70,442.41 L464.20,437.75 L464.70,433.18 L465.20,428.74 L465.70,424.49 L466.20,420.48 L466.70,416.75 L467.20,413.35 L467.70,410.32 L468.20,407.69 L468.70,405.50 L469.20,403.76 L469.70,402.51 L470.20,401.75 L470.70,401.50 L471.20,401.74 L471.70,402.45 L472.20,403.62 L472.70,405.24 L473.20,407.29 L473.70,409.76 L474.20,412.61 L474.70,415.81 L475.20,419.33 L475.70,423.12 L476.20,427.16 L476.70,431.39 L477.20,435.76 L477.70,440.23 L478.20,444.75 L478.70,449.27 L479.20,453.74 L479.70,458.11 L480.20,462.34 L480.70,466.38 L481.20,470.17 L481.70,473.69 L482.20,476.89 L482.70,479.74 L483.20,482.21 L483.70,484.26 L484.20,485.88 L484.70,487.05 L485.20,487.76 L485.70,488.00 L486.20,487.73 L486.71,486.92 L487.21,485.57 L487.71,483.72 L488.22,481.37 L488.72,478.56 L489.23,475.33 L489.73,471.72 L490.23,467.76 L490.74,463.52 L491.24,459.03 L491.74,454.37 L492.25,449.59 L492.75,444.75 L493.25,439.91 L493.76,435.13 L494.26,430.47 L494.76,425.98 L495.27,421.74 L495.77,417.78 L496.27,414.17 L496.78,410.94 L497.28,408.13 L497.79,405.78 L498.29,403.93 L498.79,402.58 L499.30,401.77 L499.80,401.50 L500.31,401.74 L500.83,402.45 L501.34,403.62 L501.85,405.24 L502.37,407.29 L502.88,409.76 L503.39,412.61 L503.91,415.81 L504.42,419.33 L504.93,423.12 L505.45,427.16 L505.96,431.39 L506.47,435.76 L506.99,440.23 L507.50,444.75 L508.01,449.27 L508.53,453.74 L509.04,458.11 L509.55,462.34 L510.07,466.38 L510.58,470.17 L511.09,473.69 L511.61,476.89 L512.12,479.74 L512.63,482.21 L513.15,484.26 L513.66,485.88 L514.17,487.05 L514.69,487.76 L515.20,488.00 L515.70,487.75 L516.20,486.99 L516.70,485.74 L517.20,484.00 L517.70,481.81 L518.20,479.18 L518.70,476.15 L519.20,472.75 L519.70,469.02 L520.20,465.01 L520.70,460.76 L521.20,456.32 L521.70,451.75 L522.20,447.09 L522.70,442.41 L523.20,437.75 L523.70,433.18 L524.20,428.74 L524.70,424.49 L525.20,420.48 L525.70,416.75 L526.20,413.35 L526.70,410.32 L527.20,407.69 L527.70,405.50 L528.20,403.76 L528.70,402.51 L529.20,401.75 L529.70,401.50 L530.21,401.72 L530.71,402.39 L531.22,403.48 L531.73,405.01 L532.23,406.93 L532.74,409.25 L533.25,411.93 L533.75,414.95 L534.26,418.28 L534.76,421.87 L535.27,425.70 L535.78,429.73 L536.28,433.91 L536.79,438.20 L537.30,442.56 L537.80,446.94 L538.31,451.30 L538.82,455.59 L539.32,459.77 L539.83,463.80 L540.34,467.63 L540.84,471.22 L541.35,474.55 L541.85,477.57 L542.36,480.25 L542.87,482.57 L543.37,484.49 L543.88,486.02 L544.39,487.11 L544.89,487.78 L545.40,488.00 L545.90,487.76 L546.40,487.05 L546.90,485.88 L547.40,484.26 L547.90,482.21 L548.40,479.74 L548.90,476.89 L549.40,473.69 L549.90,470.17 L550.40,466.38 L550.90,462.34 L551.40,458.11 L551.90,453.74 L552.40,449.27 L552.90,444.75 L553.40,440.23 L553.90,435.76 L554.40,431.39 L554.90,427.16 L555.40,423.12 L555.90,419.33 L556.40,415.81 L556.90,412.61 L557.40,409.76 L557.90,407.29 L558.40,405.24 L558.90,403.62 L559.40,402.45 L559.90,401.74 L560.40,401.50 L560.91,401.75 L561.43,402.51 L561.94,403.76 L562.46,405.50 L562.97,407.69 L563.48,410.32 L564.00,413.35 L564.51,416.75 L565.02,420.48 L565.54,424.49 L566.05,428.74 L566.57,433.18 L567.08,437.75 L567.59,442.41 L568.11,447.09 L568.62,451.75 L569.13,456.32 L569.65,460.76 L570.16,465.01 L570.68,469.02 L571.19,472.75 L571.70,476.15 L572.22,479.18 L572.73,481.81 L573.24,484.00 L573.76,485.74 L574.27,486.99 L574.79,487.75 L575.30,488.00 L575.81,487.78 L576.31,487.11 L576.82,486.02 L577.33,484.49 L577.83,482.57 L578.34,480.25 L578.85,477.57 L579.35,474.55 L579.86,471.22 L580.36,467.63 L580.87,463.80 L581.38,459.77 L581.88,455.59 L582.39,451.30 L582.90,446.94 L583.40,442.56 L583.91,438.20 L584.42,433.91 L584.92,429.73 L585.43,425.70 L585.94,421.87 L586.44,418.28 L586.95,414.95 L587.45,411.93 L587.96,409.25 L588.47,406.93 L588.97,405.01 L589.48,403.48 L589.99,402.39 L590.49,401.72 L591.00,401.50 L591.51,401.74 L592.03,402.45 L592.54,403.62 L593.05,405.24 L593.57,407.29 L594.08,409.76 L594.59,412.61 L595.11,415.81 L595.62,419.33 L596.13,423.12 L596.65,427.16 L597.16,431.39 L597.67,435.76 L598.19,440.23 L598.70,444.75 L599.21,449.27 L599.73,453.74 L600.24,458.11 L600.75,462.34 L601.27,466.38 L601.78,470.17 L602.29,473.69 L602.81,476.89 L603.32,479.74 L603.83,482.21 L604.35,484.26 L604.86,485.88 L605.37,487.05 L605.89,487.76 L606.40,488.00 L606.91,487.75 L607.43,486.99 L607.94,485.74 L608.46,484.00 L608.97,481.81 L609.48,479.18 L610.00,476.15 L610.51,472.75 L611.02,469.02 L611.54,465.01 L612.05,460.76 L612.57,456.32 L613.08,451.75 L613.59,447.09 L614.11,442.41 L614.62,437.75 L615.13,433.18 L615.65,428.74 L616.16,424.49 L616.68,420.48 L617.19,416.75 L617.70,413.35 L618.22,410.32 L618.73,407.69 L619.24,405.50 L619.76,403.76 L620.27,402.51 L620.79,401.75 L621.30,401.50 L621.80,401.70 L622.30,402.28 L622.80,403.25 L623.30,404.60 L623.80,406.31 L624.30,408.37 L624.80,410.75 L625.30,413.45 L625.80,416.43 L626.30,419.66 L626.80,423.12 L627.30,426.78 L627.80,430.60 L628.30,434.55 L628.80,438.59 L629.30,442.69 L629.80,446.81 L630.30,450.91 L630.80,454.95 L631.30,458.90 L631.80,462.72 L632.30,466.38 L632.80,469.84 L633.30,473.07 L633.80,476.05 L634.30,478.75 L634.80,481.13 L635.30,483.19 L635.80,484.90 L636.30,486.25 L636.80,487.22 L637.30,487.80 L637.80,488.00 L638.30,487.79 L638.81,487.17 L639.31,486.14 L639.81,484.71 L640.32,482.89 L640.82,480.71 L641.32,478.18 L641.82,475.33 L642.33,472.19 L642.83,468.78 L643.33,465.14 L643.84,461.30 L644.34,457.30 L644.84,453.19 L645.35,448.99 L645.85,444.75 L646.35,440.51 L646.86,436.31 L647.36,432.20 L647.86,428.20 L648.37,424.36 L648.87,420.72 L649.37,417.31 L649.88,414.17 L650.38,411.32 L650.88,408.79 L651.38,406.61 L651.89,404.79 L652.39,403.36 L652.89,402.33 L653.40,401.71 L653.90,401.50 L654.41,401.72 L654.91,402.39 L655.42,403.48 L655.93,405.01 L656.43,406.93 L656.94,409.25 L657.45,411.93 L657.95,414.95 L658.46,418.28 L658.96,421.87 L659.47,425.70 L659.98,429.73 L660.48,433.91 L660.99,438.20 L661.50,442.56 L662.00,446.94 L662.51,451.30 L663.02,455.59 L663.52,459.77 L664.03,463.80 L664.54,467.63 L665.04,471.22 L665.55,474.55 L666.05,477.57 L666.56,480.25 L667.07,482.57 L667.57,484.49 L668.08,486.02 L668.59,487.11 L669.09,487.78 L669.60,488.00 L670.10,487.80 L670.60,487.22 L671.10,486.25 L671.60,484.90 L672.10,483.19 L672.60,481.13 L673.10,478.75 L673.60,476.05 L674.10,473.07 L674.60,469.84 L675.10,466.38 L675.60,462.72 L676.10,458.90 L676.60,454.95 L677.10,450.91 L677.60,446.81 L678.10,442.69 L678.60,438.59 L679.10,434.55 L679.60,430.60 L680.10,426.78 L680.60,423.12 L681.10,419.66 L681.60,416.43 L682.10,413.45 L682.60,410.75 L683.10,408.37 L683.60,406.31 L684.10,404.60 L684.60,403.25 L685.10,402.28 L685.60,401.70 L686.10,401.50 L686.61,401.72 L687.12,402.39 L687.63,403.48 L688.14,405.01 L688.65,406.93 L689.16,409.25 L689.67,411.93 L690.18,414.95 L690.69,418.28 L691.20,421.87 L691.71,425.70 L692.22,429.73 L692.73,433.91 L693.24,438.20 L693.75,442.56 L694.25,446.94 L694.76,451.30 L695.27,455.59 L695.78,459.77 L696.29,463.80 L696.80,467.63 L697.31,471.22 L697.82,474.55 L698.33,477.57 L698.84,480.25 L699.35,482.57 L699.86,484.49 L700.37,486.02 L700.88,487.11 L701.39,487.78 L701.90,488.00 L702.41,487.78 L702.91,487.11 L703.42,486.02 L703.93,484.49 L704.43,482.57 L704.94,480.25 L705.45,477.57 L705.95,474.55 L706.46,471.22 L706.96,467.63 L707.47,463.80 L707.98,459.77 L708.48,455.59 L708.99,451.30 L709.50,446.94 L710.00,442.56 L710.51,438.20 L711.02,433.91 L711.52,429.73 L712.03,425.70 L712.54,421.87 L713.04,418.28 L713.55,414.95 L714.05,411.93 L714.56,409.25 L715.07,406.93 L715.57,405.01 L716.08,403.48 L716.59,402.39 L717.09,401.72 L717.60,401.50 L718.10,401.70 L718.60,402.28 L719.10,403.25 L719.60,404.60 L720.10,406.31 L720.60,408.37 L721.10,410.75 L721.60,413.45 L722.10,416.43 L722.60,419.66 L723.10,423.12 L723.60,426.78 L724.10,430.60 L724.60,434.55 L725.10,438.59 L725.60,442.69 L726.10,446.81 L726.60,450.91 L727.10,454.95 L727.60,458.90 L728.10,462.72 L728.60,466.38 L729.10,469.84 L729.60,473.07 L730.10,476.05 L730.60,478.75 L731.10,481.13 L731.60,483.19 L732.10,484.90 L732.60,486.25 L733.10,487.22 L733.60,487.80 L734.10,488.00 L734.60,487.80 L735.10,487.22 L735.60,486.25 L736.10,484.90 L736.60,483.19 L737.10,481.13 L737.60,478.75 L738.10,476.05 L738.60,473.07 L739.10,469.84 L739.60,466.38 L740.10,462.72 L740.60,458.90 L741.10,454.95 L741.60,450.91 L742.10,446.81 L742.60,442.69 L743.10,438.59 L743.60,434.55 L744.10,430.60 L744.60,426.78 L745.10,423.12 L745.60,419.66 L746.10,416.43 L746.60,413.45 L747.10,410.75 L747.60,408.37 L748.10,406.31 L748.60,404.60 L749.10,403.25 L749.60,402.28 L750.10,401.70 L750.60,401.50 L751.10,401.71 L751.61,402.33 L752.11,403.36 L752.61,404.79 L753.12,406.61 L753.62,408.79 L754.12,411.32 L754.62,414.17 L755.13,417.31 L755.63,420.72 L756.13,424.36 L756.64,428.20 L757.14,432.20 L757.64,436.31 L758.15,440.51 L758.65,444.75 L759.15,448.99 L759.66,453.19 L760.16,457.30 L760.66,461.30 L761.17,465.14 L761.67,468.78 L762.17,472.19 L762.68,475.33 L763.18,478.18 L763.68,480.71 L764.18,482.89 L764.69,484.71 L765.19,486.14 L765.69,487.17 L766.20,487.79 L766.70,488.00 L767.21,487.83 L767.71,487.30 L768.22,486.44 L768.72,485.24 L769.23,483.72 L769.73,481.88 L770.24,479.74 L770.75,477.32 L771.25,474.64 L771.76,471.72 L772.26,468.58 L772.77,465.24 L773.27,461.75 L773.78,458.11 L774.29,454.37 L774.79,450.56 L775.30,446.69 L775.80,442.81 L776.31,438.94 L776.81,435.13 L777.32,431.39 L777.83,427.75 L778.33,424.26 L778.84,420.92 L779.34,417.78 L779.85,414.86 L780.35,412.18 L780.86,409.76 L781.37,407.62 L781.87,405.78 L782.38,404.26 L782.88,403.06 L783.39,402.20 L783.89,401.67 L784.40,401.50 L784.91,401.72 L785.41,402.39 L785.92,403.48 L786.43,405.01 L786.93,406.93 L787.44,409.25 L787.95,411.93 L788.45,414.95 L788.96,418.28 L789.46,421.87 L789.97,425.70 L790.48,429.73 L790.98,433.91 L791.49,438.20 L792.00,442.56 L792.50,446.94 L793.01,451.30 L793.52,455.59 L794.02,459.77 L794.53,463.80 L795.04,467.63 L795.54,471.22 L796.05,474.55 L796.55,477.57 L797.06,480.25 L797.57,482.57 L798.07,484.49 L798.58,486.02 L799.09,487.11 L799.59,487.78 L800.10,488.00 L800.61,487.83 L801.11,487.30 L801.62,486.44 L802.12,485.24 L802.63,483.72 L803.13,481.88 L803.64,479.74 L804.15,477.32 L804.65,474.64 L805.16,471.72 L805.66,468.58 L806.17,465.24 L806.67,461.75 L807.18,458.11 L807.69,454.37 L808.19,450.56 L808.70,446.69 L809.20,442.81 L809.71,438.94 L810.21,435.13 L810.72,431.39 L811.23,427.75 L811.73,424.26 L812.24,420.92 L812.74,417.78 L813.25,414.86 L813.75,412.18 L814.26,409.76 L814.77,407.62 L815.27,405.78 L815.78,404.26 L816.28,403.06 L816.79,402.20 L817.29,401.67 L817.80,401.50 L818.30,401.70 L818.80,402.28 L819.30,403.25 L819.80,404.60 L820.30,406.31 L820.80,408.37 L821.30,410.75 L821.80,413.45 L822.30,416.43 L822.80,419.66 L823.30,423.12 L823.80,426.78 L824.30,430.60 L824.80,434.55 L825.30,438.59 L825.80,442.69 L826.30,446.81 L826.80,450.91 L827.30,454.95 L827.80,458.90 L828.30,462.72 L828.80,466.38 L829.30,469.84 L829.80,473.07 L830.30,476.05 L830.80,478.75 L831.30,481.13 L831.80,483.19 L832.30,484.90 L832.80,486.25 L833.30,487.22 L833.80,487.80 L834.30,488.00 L834.81,487.83 L835.31,487.30 L835.82,486.44 L836.32,485.24 L836.83,483.72 L837.33,481.88 L837.84,479.74 L838.35,477.32 L838.85,474.64 L839.36,471.72 L839.86,468.58 L840.37,465.24 L840.87,461.75 L841.38,458.11 L841.89,454.37 L842.39,450.56 L842.90,446.69 L843.40,442.81 L843.91,438.94 L844.41,435.13 L844.92,431.39 L845.43,427.75 L845.93,424.26 L846.44,420.92 L846.94,417.78 L847.45,414.86 L847.95,412.18 L848.46,409.76 L848.97,407.62 L849.47,405.78 L849.98,404.26 L850.48,403.06 L850.99,402.20 L851.49,401.67 L852.00,401.50 L852.52,401.78 L853.03,402.63 L853.55,404.03 L854.06,405.97 L854.58,408.40 L855.09,411.31 L855.61,414.64 L856.12,418.35 L856.64,422.38 L857.15,426.67 L857.67,431.17 L858.18,435.80 L858.70,440.50 L859.22,445.20 L859.73,449.83 L860.25,454.33 L860.76,458.62 L861.28,462.65 L861.79,466.36 L862.31,469.69 L862.82,472.60 L863.34,475.03 L863.85,476.97 L864.37,478.37 L864.88,479.22 L865.40,479.50 L866.30,436.50 L869.00,444.50 L877,444.5 L877,443.5 L878,443.5 L878,444.5 L901,444.5 L901,443.5 L902,443.5 L902,444.5 L922,444.5 L922,443.5 L923,443.5 L923,444.5 L938,444.5 L938,443.5 L939,443.5 L939,444.5 L963,444.5 L963,443.5 L964,443.5 L964,444.5 L969,444.5 L969,443.5 L970,443.5 L970,444.5 L987,444.5 L987,443.5 L988,443.5 L988,444.5 L1003,444.5 L1003,443.5 L1004,443.5 L1004,444.5 L1009,444.5 L1009,443.5 L1010,443.5 L1010,444.5 L1026,444.5 L1026,443.5 L1027,443.5 L1027,444.5 L1032,444.5 L1032,443.5 L1033,443.5 L1033,444.5 L1046,444.5 L1046,443.5 L1047,443.5 L1047,444.5 L1050,444.5 L1050,443.5 L1051,443.5 L1051,444.5 L1054,444.5 L1054,443.5 L1055,443.5 L1055,444.5 L1058,444.5 L1058,443.5 L1059,443.5 L1059,444.5 L1063,444.5 L1063,443.5 L1064,443.5 L1064,444.5 L1068,444.5" fill="none" stroke="#0000f8" stroke-width="1.1" shape-rendering="crispEdges"/>
<path d="M1068.5,444.5 L1068.50,444.50 L1069.07,446.38 L1069.63,450.12 L1070.20,452.00 L1070.71,451.58 L1071.23,450.33 L1071.74,448.29 L1072.25,445.56 L1072.76,442.22 L1073.28,438.42 L1073.79,434.29 L1074.30,430.00 L1074.81,425.71 L1075.33,421.58 L1075.84,417.78 L1076.35,414.44 L1076.86,411.71 L1077.38,409.67 L1077.89,408.42 L1078.40,408.00 L1078.91,408.37 L1079.43,409.46 L1079.94,411.27 L1080.45,413.75 L1080.97,416.86 L1081.48,420.54 L1081.99,424.72 L1082.50,429.33 L1083.02,434.27 L1083.53,439.46 L1084.04,444.80 L1084.56,450.20 L1085.07,455.54 L1085.58,460.73 L1086.10,465.67 L1086.61,470.28 L1087.12,474.46 L1087.63,478.14 L1088.15,481.25 L1088.66,483.73 L1089.17,485.54 L1089.69,486.63 L1090.20,487.00 L1090.71,486.77 L1091.22,486.07 L1091.73,484.91 L1092.24,483.30 L1092.75,481.27 L1093.26,478.84 L1093.77,476.02 L1094.28,472.86 L1094.79,469.38 L1095.30,465.62 L1095.81,461.64 L1096.32,457.46 L1096.83,453.14 L1097.34,448.72 L1097.85,444.25 L1098.36,439.78 L1098.87,435.36 L1099.38,431.04 L1099.89,426.86 L1100.40,422.88 L1100.91,419.12 L1101.42,415.64 L1101.93,412.48 L1102.44,409.66 L1102.95,407.23 L1103.46,405.20 L1103.97,403.59 L1104.48,402.43 L1104.99,401.73 L1105.50,401.50 L1106.01,401.75 L1106.51,402.50 L1107.02,403.74 L1107.53,405.45 L1108.03,407.62 L1108.54,410.22 L1109.05,413.21 L1109.56,416.57 L1110.06,420.26 L1110.57,424.23 L1111.08,428.43 L1111.58,432.81 L1112.09,437.33 L1112.60,441.94 L1113.10,446.56 L1113.61,451.17 L1114.12,455.69 L1114.62,460.07 L1115.13,464.27 L1115.64,468.24 L1116.14,471.93 L1116.65,475.29 L1117.16,478.28 L1117.67,480.88 L1118.17,483.05 L1118.68,484.76 L1119.19,486.00 L1119.69,486.75 L1120.20,487.00 L1120.71,486.75 L1121.22,486.00 L1121.73,484.76 L1122.24,483.05 L1122.75,480.88 L1123.26,478.28 L1123.77,475.29 L1124.28,471.93 L1124.79,468.24 L1125.30,464.27 L1125.81,460.07 L1126.32,455.69 L1126.83,451.17 L1127.34,446.56 L1127.86,441.94 L1128.37,437.33 L1128.88,432.81 L1129.39,428.43 L1129.90,424.23 L1130.41,420.26 L1130.92,416.57 L1131.43,413.21 L1131.94,410.22 L1132.45,407.62 L1132.96,405.45 L1133.47,403.74 L1133.98,402.50 L1134.49,401.75 L1135.00,401.50 L1135.51,401.75 L1136.01,402.50 L1136.52,403.74 L1137.03,405.45 L1137.53,407.62 L1138.04,410.22 L1138.55,413.21 L1139.06,416.57 L1139.56,420.26 L1140.07,424.23 L1140.58,428.43 L1141.08,432.81 L1141.59,437.33 L1142.10,441.94 L1142.60,446.56 L1143.11,451.17 L1143.62,455.69 L1144.12,460.07 L1144.63,464.27 L1145.14,468.24 L1145.64,471.93 L1146.15,475.29 L1146.66,478.28 L1147.17,480.88 L1147.67,483.05 L1148.18,484.76 L1148.69,486.00 L1149.19,486.75 L1149.70,487.00 L1150.21,486.77 L1150.72,486.07 L1151.23,484.91 L1151.74,483.30 L1152.25,481.27 L1152.76,478.84 L1153.27,476.02 L1153.78,472.86 L1154.29,469.38 L1154.80,465.62 L1155.31,461.64 L1155.82,457.46 L1156.33,453.14 L1156.84,448.72 L1157.35,444.25 L1157.86,439.78 L1158.37,435.36 L1158.88,431.04 L1159.39,426.86 L1159.90,422.88 L1160.41,419.12 L1160.92,415.64 L1161.43,412.48 L1161.94,409.66 L1162.45,407.23 L1162.96,405.20 L1163.47,403.59 L1163.98,402.43 L1164.49,401.73 L1165.00,401.50" fill="none" stroke="#000070" stroke-width="1.1" shape-rendering="crispEdges"/>
</svg>
<div class="a" style="left:1153px;top:242px;width:511px;height:643px;background:#f0f0f0;border:1px solid #1c7fd6;box-shadow:0 6px 18px rgba(0,0,0,0.28),0 0 8px rgba(0,0,0,0.12)"></div>
<div class="a" style="left:1154px;top:243px;width:509px;height:36px;background:#ffffff;"></div>
<div class="t w" style="left:1156.90px;top:252.80px;font-size:18.9px;color:#000;transform:scaleX(0.9102);">Propriétés</div>
<svg class="a" style="left:1630px;top:252.3px" width="17" height="17" viewBox="0 0 17 17"><path d="M1,1 L16,16 M16,1 L1,16" stroke="#111" stroke-width="1.15"/></svg>
<div class="a" style="left:1170px;top:297px;width:113px;height:35px;border:1px solid #646464;background:#f0f0f0;box-shadow:inset 1px 1px 0 #fff,inset -1px -1px 0 #696969,inset -2px -2px 0 #a0a0a0"></div>
<div class="t" style="left:1216.00px;top:307.46px;font-size:16px;color:#000;transform:scaleX(0.9084);">OK</div>
<div class="a" style="left:1510px;top:297px;width:137px;height:35px;border-top:1px solid #fff;border-left:1px solid #fff;border-right:2px solid #696969;border-bottom:2px solid #696969;background:#f0f0f0"></div>
<div class="t" style="left:1519.00px;top:307.46px;font-size:16px;color:#000;transform:scaleX(0.9792);">Exporter en texte</div>
<div class="a" style="left:1170px;top:344px;width:477px;height:523px;border-top:2px solid #6e6e6e;border-left:2px solid #6e6e6e;border-right:1px solid #fff;border-bottom:1px solid #fff;background:#f0f0f0"></div>
<div class="a" style="left:1645px;top:346px;width:1px;height:520px;background:#e3e3e3;"></div>
<div class="a" style="left:1172px;top:865px;width:474px;height:1px;background:#e3e3e3;"></div>
<div class="a" style="left:1619px;top:346px;width:1px;height:519px;background:#ffffff;"></div>
<svg class="a" style="left:1620px;top:350px" width="25" height="20" viewBox="1620 350 25 20"><path d="M1628,364 L1632.5,358.5 L1637,364" fill="none" stroke="#bdbdbd" stroke-width="3.2"/></svg>
<svg class="a" style="left:1620px;top:840px" width="25" height="20" viewBox="1620 840 25 20"><path d="M1628,848.5 L1632.5,854 L1637,848.5" fill="none" stroke="#bdbdbd" stroke-width="3.2"/></svg>
<div class="a" style="left:1172px;top:346px;width:447px;height:519px;overflow:hidden">
<div class="t" style="left:1.60px;top:4.46px;font-size:16px;color:#000;">General information:</div>
<div class="t" style="left:73.00px;top:24.46px;font-size:16px;color:#000;">Sample name:</div>
<div class="t" style="left:289.00px;top:24.46px;font-size:16px;color:#000;">C:\Users\JP\Desktop\s</div>
<div class="t" style="left:73.00px;top:44.46px;font-size:16px;color:#000;">Channel number:</div>
<div class="t" style="left:289.00px;top:44.46px;font-size:16px;color:#000;">2</div>
<div class="t" style="left:73.00px;top:64.46px;font-size:16px;color:#000;">Sample number:</div>
<div class="t" style="left:289.00px;top:64.46px;font-size:16px;color:#000;">6086656</div>
<div class="t" style="left:73.00px;top:84.46px;font-size:16px;color:#000;">Total duration:</div>
<div class="t" style="left:289.00px;top:84.46px;font-size:16px;color:#000;">00:00:02:536</div>
<div class="t" style="left:73.00px;top:104.46px;font-size:16px;color:#000;">Frequency:</div>
<div class="t" style="left:289.00px;top:104.46px;font-size:16px;color:#000;">2400000Hz</div>
<div class="t" style="left:73.00px;top:124.46px;font-size:16px;color:#000;">Bits per sample:</div>
<div class="t" style="left:289.00px;top:124.46px;font-size:16px;color:#000;">16</div>
<div class="t" style="left:73.00px;top:144.46px;font-size:16px;color:#000;">Format:</div>
<div class="t" style="left:289.00px;top:144.46px;font-size:16px;color:#000;">PCM</div>
<div class="t" style="left:1.60px;top:164.46px;font-size:16px;color:#000;">Selection:</div>
<div class="t" style="left:73.00px;top:184.46px;font-size:16px;color:#000;">Selection start:</div>
<div class="t" style="left:289.00px;top:184.46px;font-size:16px;color:#000;">1424797</div>
<div class="t" style="left:73.00px;top:204.46px;font-size:16px;color:#000;">Selection end:</div>
<div class="t" style="left:289.00px;top:204.46px;font-size:16px;color:#000;">1428049</div>
<div class="t" style="left:73.00px;top:224.46px;font-size:16px;color:#000;">Delta:</div>
<div class="t" style="left:289.00px;top:224.46px;font-size:16px;color:#000;">3253</div>
<div class="t" style="left:1.60px;top:244.46px;font-size:16px;color:#000;">No loop points</div>
<div class="t" style="left:1.60px;top:264.46px;font-size:16px;color:#000;">No marker points</div>
<div class="t" style="left:1.60px;top:284.46px;font-size:16px;color:#000;">No automation points</div>
</div>
</body></html>
